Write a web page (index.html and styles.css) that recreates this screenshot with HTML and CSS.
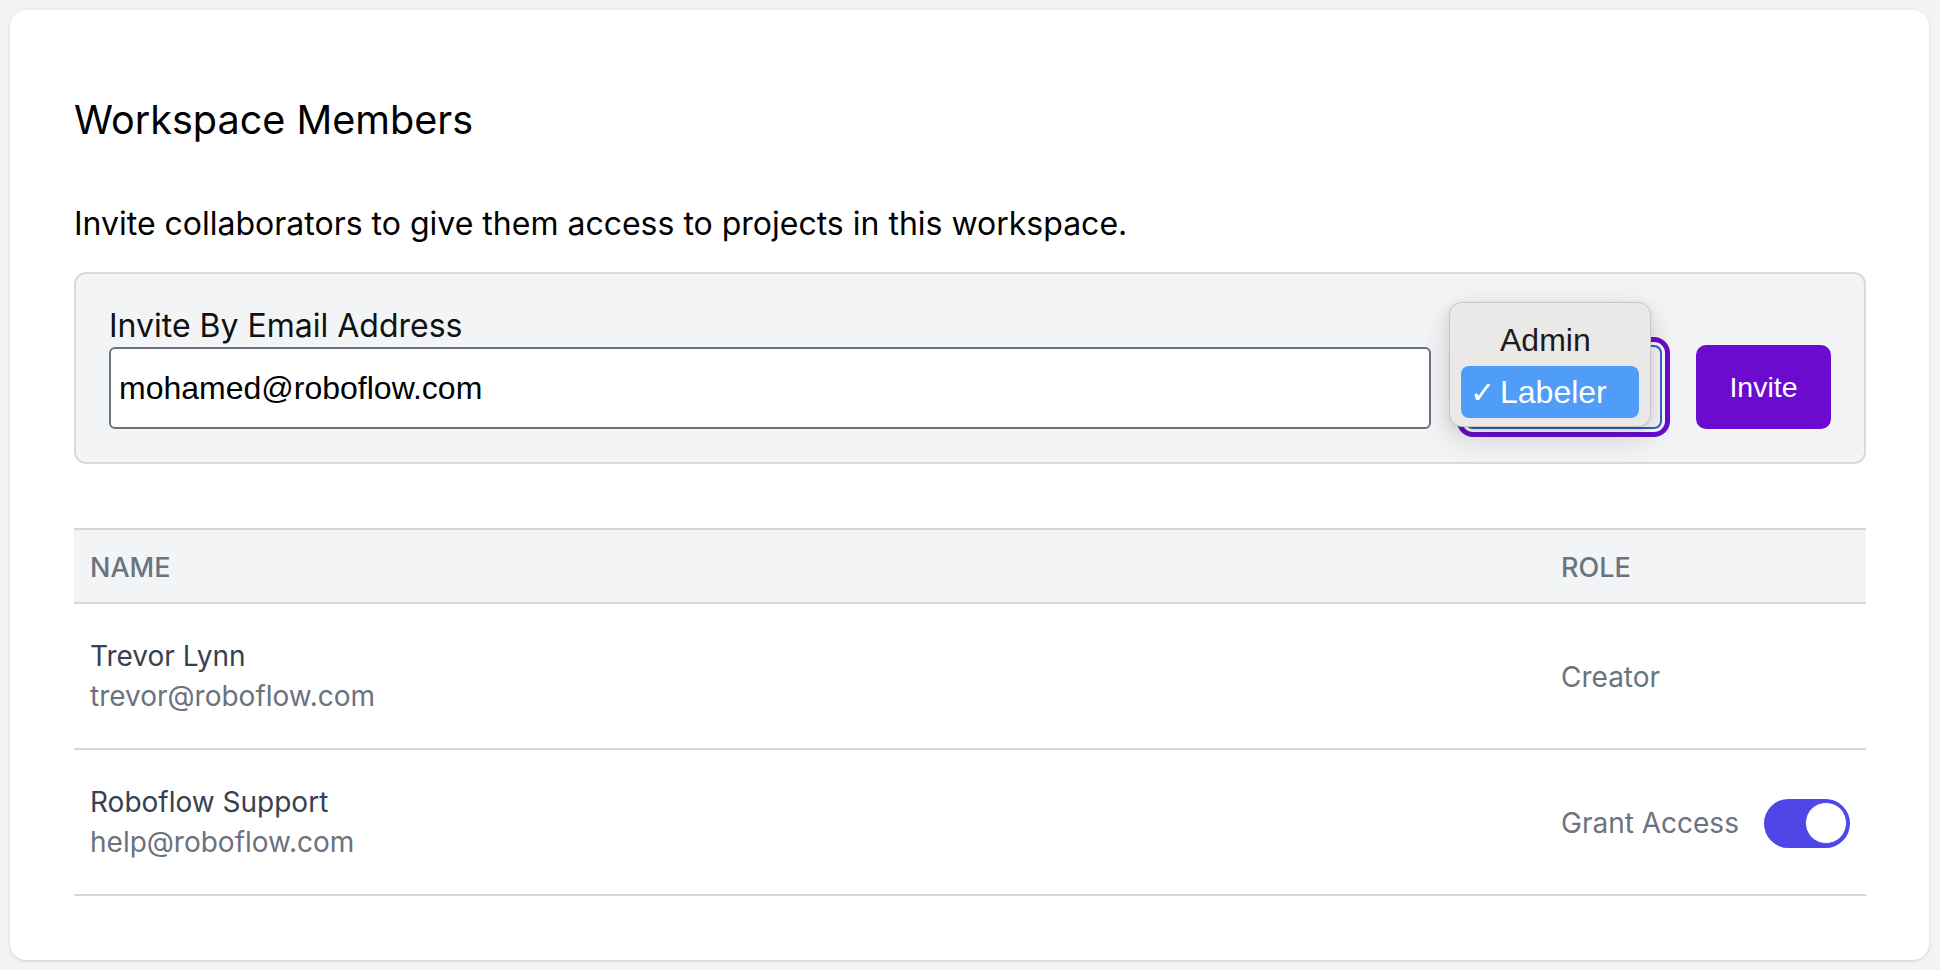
FILE: index.html
```html
<!DOCTYPE html>
<html lang="en">
<head>
<meta charset="utf-8">
<title>Workspace Members</title>
<link rel="stylesheet" href="styles.css">
</head>
<body>
<main class="card">
  <h1 class="title">Workspace Members</h1>
  <p class="subtitle">Invite collaborators to give them access to projects in this workspace.</p>

  <section class="invite-box">
    <div class="field">
      <label class="field-label" for="email">Invite By Email Address</label>
      <div class="field-input" id="email">mohamed@roboflow.com</div>
    </div>
    <div class="select-wrap">
      <div class="select" aria-label="Role"></div>
      <div class="menu">
        <div class="menu-item">Admin</div>
        <div class="menu-item selected"><span class="check">✓</span>Labeler</div>
      </div>
    </div>
    <button class="invite-btn">Invite</button>
  </section>

  <div class="table">
    <div class="row head">
      <div class="cell">NAME</div>
      <div class="cell">ROLE</div>
    </div>
    <div class="row">
      <div class="cell person">
        <div class="name">Trevor Lynn</div>
        <div class="email">trevor@roboflow.com</div>
      </div>
      <div class="cell role">Creator</div>
    </div>
    <div class="row">
      <div class="cell person">
        <div class="name">Roboflow Support</div>
        <div class="email">help@roboflow.com</div>
      </div>
      <div class="cell role">
        <span>Grant Access</span>
        <span class="toggle"><span class="knob"></span></span>
      </div>
    </div>
  </div>
</main>
</body>
</html>
```

FILE: styles.css
```css
* { box-sizing: border-box; }

html, body {
  margin: 0;
  height: 100%;
}

body {
  background: #f3f4f6;
  padding: 10px 11px 10px 10px;
  font-family: Inter, "Noto Sans", sans-serif;
  color: #000;
}

.card {
  background: #ffffff;
  border-radius: 16px;
  box-shadow: 0 1px 4px rgba(0, 0, 0, 0.10), 0 1px 2px rgba(0, 0, 0, 0.06);
  height: 950px;
  padding: 86px 63px 0 64px;
}

.title {
  margin: 0;
  font-size: 39.6px;
  line-height: 48px;
  font-weight: 400;
  color: #000;
}

.subtitle {
  margin: 60px 0 0;
  font-size: 32px;
  line-height: 40px;
  color: #000;
}

.invite-box {
  margin-top: 28px;
  background: #f3f4f6;
  border: 2px solid #d8dadf;
  border-radius: 12px;
  padding: 33px;
  display: flex;
  align-items: flex-end;
  gap: 34px;
}

.field {
  flex: 1;
  display: flex;
  flex-direction: column;
  gap: 2px;
}

.field-label {
  font-size: 32px;
  line-height: 38px;
  color: #111;
}

.field-input {
  height: 82px;
  background: #fff;
  border: 2px solid #6b7280;
  border-radius: 6px;
  padding: 0 8px;
  display: flex;
  align-items: center;
  font-family: "Liberation Sans", Arial, sans-serif;
  font-size: 32px;
  color: #000;
}

.select-wrap {
  position: relative;
  width: 197px;
  height: 84px;
}

.select {
  width: 100%;
  height: 100%;
  background: #f7f7f8;
  border: 2px solid #2d5fcf;
  border-radius: 8px;
  box-shadow: 0 0 0 3px #fbfbfc, 0 0 0 8px #6a0dcd;
}

.menu {
  position: absolute;
  left: -16px;
  top: -43px;
  width: 202px;
  height: 125px;
  padding: 11px;
  background: #ebe8e8;
  border: 1px solid #c9c6c6;
  border-radius: 13px;
  box-shadow: 0 10px 30px rgba(0, 0, 0, 0.16), 0 2px 8px rgba(0, 0, 0, 0.08);
  font-family: "Liberation Sans", Arial, sans-serif;
  font-size: 32px;
}

.menu-item {
  height: 52px;
  display: flex;
  align-items: center;
  padding-left: 39px;
  color: #1c1c1c;
  border-radius: 8px;
  position: relative;
}

.menu-item.selected {
  background: #4f9cf9;
  color: #fff;
}

.check {
  position: absolute;
  left: 9px;
  font-size: 30px;
  font-family: "DejaVu Sans", sans-serif;
}

.invite-btn {
  width: 135px;
  height: 84px;
  border: 0;
  border-radius: 10px;
  background: #6a0bcf;
  color: #fff;
  font-family: "Liberation Sans", Arial, sans-serif;
  font-size: 28.5px;
  padding: 0;
}

.table {
  margin-top: 64px;
  border-top: 2px solid #d4d6da;
}

.row {
  display: grid;
  grid-template-columns: 1fr 321px;
  border-bottom: 2px solid #d4d6da;
  height: 146px;
  align-items: center;
}

.row.head {
  height: 74px;
  background: #f3f4f6;
}

.cell {
  padding: 0 16px;
  white-space: nowrap;
}

.head .cell {
  font-size: 27px;
  font-weight: 500;
  color: #6b7280;
  padding-top: 2px;
}

.name {
  font-size: 28px;
  line-height: 40px;
  color: #374151;
}

.email {
  font-size: 28px;
  line-height: 40px;
  color: #6b7280;
}

.role {
  font-size: 28px;
  color: #6b7280;
  display: flex;
  align-items: center;
  gap: 25px;
  padding-top: 2px;
}

.toggle {
  position: relative;
  width: 88px;
  height: 49px;
  border-radius: 25px;
  background: #4f46e5;
  display: inline-block;
}

.knob {
  position: absolute;
  right: 3px;
  top: 3.5px;
  width: 42px;
  height: 42px;
  border-radius: 50%;
  background: #fff;
  border: 1px solid #5a50e8;
}
```
